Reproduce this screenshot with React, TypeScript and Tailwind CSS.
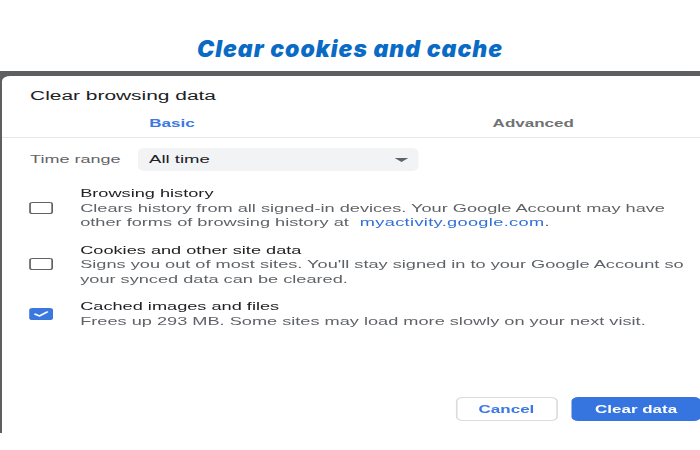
import { type JSX } from "react";

// The source screenshot of the dialog is stretched sideways, so the dialog is
// laid out at its natural width and widened with one scale-x.

interface ItemProps {
  title: string;
  lines: (string | JSX.Element)[];
  checked?: boolean;
}

function CheckBox({ checked }: { checked?: boolean }): JSX.Element {
  if (checked) {
    return (
      <span className="flex h-[12px] w-[13.5px] shrink-0 items-center justify-center rounded-[2px] bg-[#3a78e0]">
        <svg width="10" height="8" viewBox="0 0 10 8">
          <polyline
            points="1.5,4.2 4,6 8.5,2"
            fill="none"
            stroke="white"
            strokeWidth="1.5"
            strokeLinecap="round"
            strokeLinejoin="round"
          />
        </svg>
      </span>
    );
  }
  return (
    <span className="h-[12px] w-[13.5px] shrink-0 rounded-[2px] border-[1.8px] border-[#5f6368]" />
  );
}

function Item({ title, lines, checked }: ItemProps): JSX.Element {
  return (
    <div className="flex items-center pl-[16px]">
      <CheckBox checked={checked} />
      <div className="ml-[16.5px] whitespace-nowrap text-[10.7px] leading-[14.5px]">
        <div className="text-[#202124]">{title}</div>
        {lines.map((line, i) => (
          <div key={i} className="text-[#5f6368]">
            {line}
          </div>
        ))}
      </div>
    </div>
  );
}

export default function App(): JSX.Element {
  return (
    <div className="h-[450px] w-[700px] overflow-hidden bg-white">
      <div className="h-[71px] pt-[35px] text-center font-['Inter',sans-serif] text-[23px] leading-[28px] font-black italic tracking-[1px] text-[#0a6bc6]">
        Clear cookies and cache
      </div>

      <div className="h-[362px] overflow-hidden bg-[#5e5f60] pt-[5px] pl-[2px]">
        <div className="flex h-[357px] w-[412px] origin-top-left scale-x-[1.7] flex-col rounded-tl-[5px] bg-white font-['Liberation_Sans',Arial,sans-serif]">
          <div className="pt-[12px] pl-[16.5px] text-[12.3px] leading-[16px] text-[#202124]">
            Clear browsing data
          </div>

          <div className="mt-[12.5px] flex border-b border-[#e6e6e6] pb-[6.5px] text-[10px] leading-[14px] font-bold">
            <span className="w-[200px] shrink-0 text-center text-[#3b78e0]">Basic</span>
            <span className="w-[225px] shrink-0 text-center text-[#6f7275]">Advanced</span>
          </div>

          <div className="mt-[10px] flex items-center pl-[16.5px]">
            <span className="w-[63px] text-[10.6px] text-[#5f6368]">Time range</span>
            <div className="flex h-[23px] w-[165px] items-center justify-between rounded-[4px] bg-[#f1f3f4] pr-[6px] pl-[7px]">
              <span className="text-[10.9px] text-[#202124]">All time</span>
              <svg width="8" height="4" viewBox="0 0 8 4">
                <polygon points="0,0 8,0 4,4" fill="#5f6368" />
              </svg>
            </div>
          </div>

          <div className="mt-[15px] flex flex-col gap-[13px]">
            <Item
              title="Browsing history"
              lines={[
                "Clears history from all signed-in devices. Your Google Account may have",
                <>
                  other forms of browsing history at{" "}
                  <span className="ml-[3.5px] tracking-[0.2px] text-[#2f6fd8]">
                    myactivity.google.com
                  </span>
                  .
                </>,
              ]}
            />
            <Item
              title="Cookies and other site data"
              lines={[
                "Signs you out of most sites. You'll stay signed in to your Google Account so",
                "your synced data can be cleared.",
              ]}
            />
            <Item
              title="Cached images and files"
              lines={["Frees up 293 MB. Some sites may load more slowly on your next visit."]}
              checked
            />
          </div>

          <div className="mt-auto flex gap-[8px] pb-[12px] pl-[266.5px] text-[10px] font-bold">
            <button
              type="button"
              className="h-[24px] w-[60.5px] shrink-0 rounded-[4px] border border-[#dadce0] bg-white text-[#3b78e0]"
            >
              Cancel
            </button>
            <button
              type="button"
              className="h-[24px] w-[76px] shrink-0 rounded-[4px] bg-[#3674e0] text-white"
            >
              Clear data
            </button>
          </div>
        </div>
      </div>
    </div>
  );
}
